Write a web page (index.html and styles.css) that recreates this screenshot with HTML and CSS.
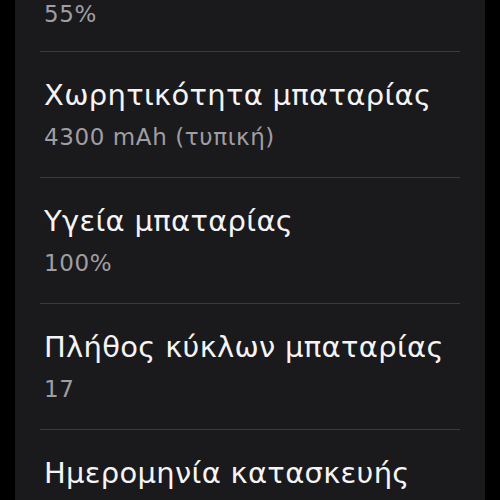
FILE: index.html
```html
<!DOCTYPE html>
<html lang="el">
<head>
    <meta charset="UTF-8">
    <title>Πληροφορίες μπαταρίας</title>
    <link rel="stylesheet" href="styles.css">
</head>
<body>
    <main class="panel">
        <div class="item item-partial">
            <div class="value">55%</div>
        </div>
        <div class="item">
            <div class="label">Χωρητικότητα μπαταρίας</div>
            <div class="value">4300 mAh (τυπική)</div>
        </div>
        <div class="item">
            <div class="label">Υγεία μπαταρίας</div>
            <div class="value">100%</div>
        </div>
        <div class="item">
            <div class="label">Πλήθος κύκλων μπαταρίας</div>
            <div class="value">17</div>
        </div>
        <div class="item">
            <div class="label">Ημερομηνία κατασκευής</div>
        </div>
    </main>
</body>
</html>
```

FILE: styles.css
```css
html, body {
    margin: 0;
    height: 100%;
    background: #000;
    overflow: hidden;
}

body {
    font-family: "DejaVu Sans", "Noto Sans", sans-serif;
}

/* Settings panel */
.panel {
    display: flow-root;
    margin: 0 15px;
    height: 100%;
    background: #1a191c;
}

.item {
    margin: 0 25px;
    padding: 24px 0 0 4px;
    height: 126px;
    box-sizing: border-box;
    border-bottom: 1px solid #3b3a3e;
}

.item-partial {
    margin-top: -74px;
    padding-top: 65px;
}

.label {
    color: #f4f4f6;
    font-size: 29px;
    line-height: 38px;
    letter-spacing: 0.3px;
}

.value {
    margin-top: 8px;
    color: #9f9ea3;
    font-size: 23px;
    line-height: 30px;
    letter-spacing: 0.6px;
}
```
